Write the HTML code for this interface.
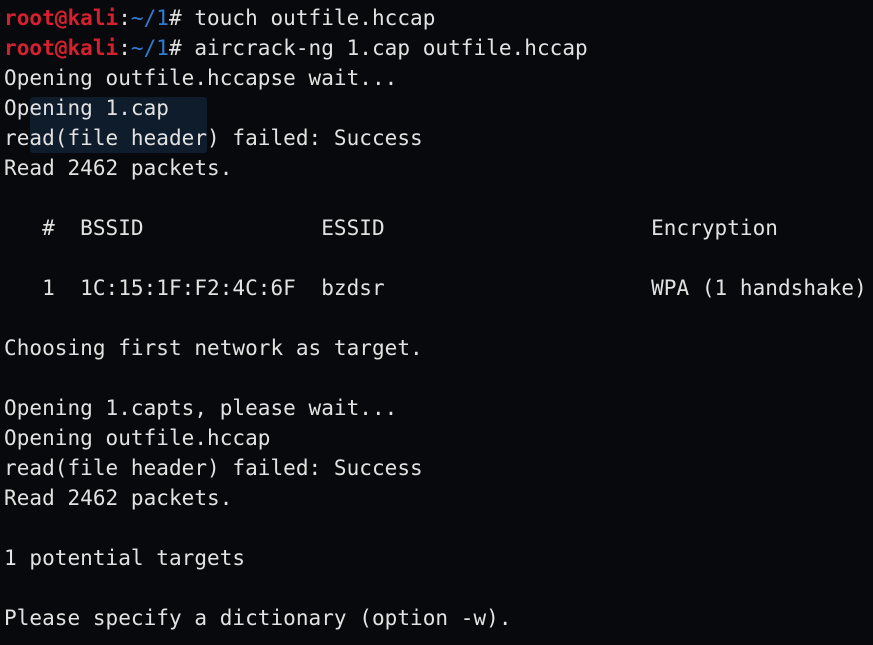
<!DOCTYPE html>
<html><head><meta charset="utf-8"><style>
html,body{margin:0;padding:0;background:#08090c;width:873px;height:645px;overflow:hidden}
pre{margin:0;position:absolute;left:4px;top:3px;font-family:"DejaVu Sans Mono","Liberation Mono",monospace;font-size:21px;line-height:30px;color:#e2e2e2;letter-spacing:0.045px}
.r{color:#d5202f;font-weight:bold}.b{color:#2f7dd3}
.hl{position:absolute;left:30px;top:97px;width:177px;height:56px;background:#0f1c2c;border-radius:3px}
</style></head><body>
<div class="hl"></div>
<pre><span class="r">root@kali</span>:<span class="b">~/1</span># touch outfile.hccap
<span class="r">root@kali</span>:<span class="b">~/1</span># aircrack-ng 1.cap outfile.hccap
Opening outfile.hccapse wait...
Opening 1.cap
read(file header) failed: Success
Read 2462 packets.

   #  BSSID              ESSID                     Encryption

   1  1C:15:1F:F2:4C:6F  bzdsr                     WPA (1 handshake)

Choosing first network as target.

Opening 1.capts, please wait...
Opening outfile.hccap
read(file header) failed: Success
Read 2462 packets.

1 potential targets

Please specify a dictionary (option -w).</pre>
</body></html>
